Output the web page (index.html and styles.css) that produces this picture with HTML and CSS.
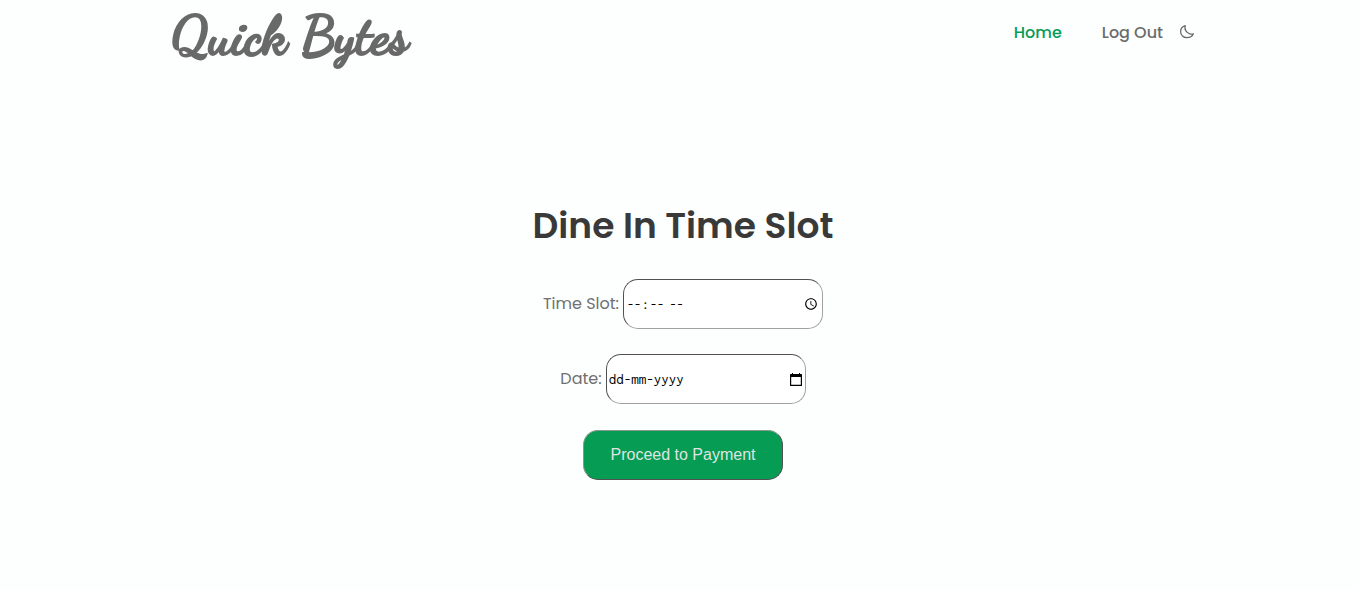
FILE: index.html
```
<!DOCTYPE html>
<html lang="en">
<head>
<meta charset="utf-8">
<meta name="viewport" content="width=device-width, initial-scale=1">
<title>Quick Bytes</title>
<link rel="stylesheet" href="styles.css">
</head>
<body>
<header class="header">
  <a class="logo" href="#">Quick Bytes</a>
  <nav class="nav">
    <a class="nav-link active" href="#">Home</a>
    <a class="nav-link" href="#">Log Out</a>
    <button class="theme-toggle" type="button" aria-label="Dark mode">
      <svg viewBox="0 0 16 16" width="16" height="16" fill="none" stroke="currentColor" stroke-width="1.3" stroke-linejoin="round"><path d="M6.200 1.600C3.400 2.400 1.600 4.700 1.600 7.600c0 3.700 2.800 6.100 6.200 6.100 3.100 0 5.500-1.400 6.600-3.900-1 .3-2.200.4-3.400 0C7.400 8.900 5.200 5.600 6.200 1.600z"/></svg>
    </button>
  </nav>
</header>
<main class="main">
  <h1 class="title">Dine In Time Slot</h1>
  <form class="form">
    <div class="row">
      <label for="time">Time Slot:</label>
      <input class="field time" id="time" type="time">
    </div>
    <div class="row">
      <label for="date">Date:</label>
      <div class="date-box">
        <input class="field" id="date" type="text" placeholder="dd-mm-yyyy">
        <svg class="date-icon" viewBox="0 0 12 13" width="12" height="13"><path fill="#000" d="M2 0h1v1h6V0h1v1h1.500q.5 0 .5.500V12.500q0 .5-.5.500H.5Q0 13 0 12.500V1.500Q0 1 .5 1H2zM1.200 4v7.800h9.600V4z" fill-rule="evenodd"/></svg>
      </div>
    </div>
    <button class="submit" type="button">Proceed to Payment</button>
  </form>
</main>
</body>
</html>
```
FILE: styles.css
```
* { box-sizing: border-box; }
body {
  margin: 0;
  padding-left: 7px;
  background: #fcfffe;
  color: #707070;
  font: 16px/24px Poppins, Inter, sans-serif;
}
.header {
  display: flex;
  justify-content: space-between;
  max-width: 1024px;
  height: 80px;
  margin: 0 auto;
}
.logo {
  color: #696969;
  font: 700 53px/72px "Dancing Script", Lato, sans-serif;
  -webkit-text-stroke: 2px #696969;
  text-decoration: none;
}
.nav {
  display: flex;
  align-items: center;
  height: 65px;
}
.nav-link {
  margin-right: 40px;
  color: #6b6b6b;
  font-weight: 500;
  text-decoration: none;
}
.nav-link.active { color: #069c54; }
.nav-link:last-of-type { margin-right: 16px; }
.theme-toggle {
  display: flex;
  padding: 0 0 2px;
  border: 0;
  background: none;
  color: #6b6b6b;
}
.main {
  padding-top: 120px;
  text-align: center;
}
.title {
  margin: 0 0 28px;
  color: #393939;
  font-size: 36px;
  font-weight: 600;
  line-height: 51px;
}
.form {
  display: flex;
  flex-direction: column;
  align-items: center;
  gap: 25px;
}
.row {
  display: flex;
  align-items: center;
  gap: 4px;
}
.field {
  display: block;
  width: 200px;
  height: 50px;
  padding: 1px 2px;
  border: 1px solid;
  border-color: #505050 #a0a0a0 #a0a0a0 #505050;
  border-radius: 15px;
  background: #fff;
  color: #000;
  font: 15px Inconsolata, monospace;
}
.time {
  padding-right: 0;
  font-size: 14px;
}
.field::placeholder { color: #000; opacity: 1; }
.date-box { position: relative; }
.date-icon {
  position: absolute;
  top: 19px;
  right: 4px;
}
.submit {
  width: 200px;
  height: 50px;
  margin-top: 1px;
  border: 1px solid;
  border-color: #8a9a90 #505050 #505050 #8a9a90;
  border-radius: 15px;
  background: #069c54;
  color: #dee5e1;
  font: 16px "Liberation Sans", sans-serif;
}
```
